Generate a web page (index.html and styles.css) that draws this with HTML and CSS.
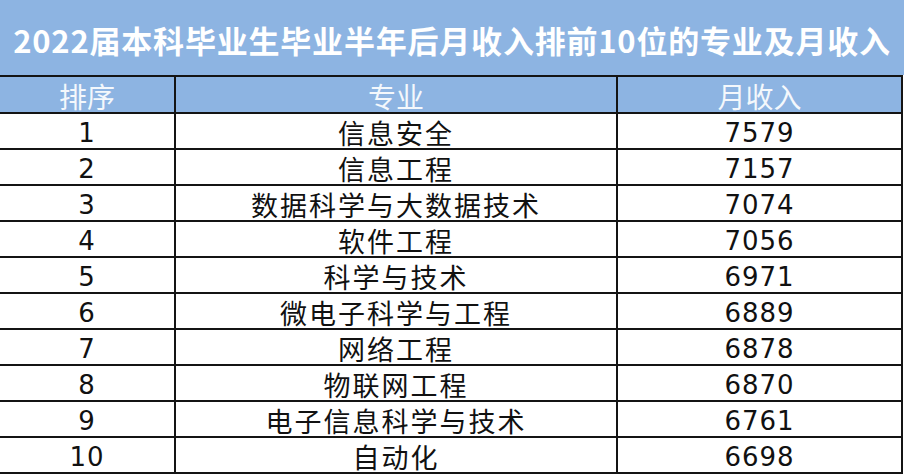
FILE: index.html
```html
<!DOCTYPE html>
<html lang="zh-CN">
<head>
<meta charset="utf-8">
<title>2022届本科毕业生毕业半年后月收入排前10位的专业及月收入</title>
<link rel="stylesheet" href="styles.css">
</head>
<body>
<div class="page">
  <div class="title">2022届本科毕业生毕业半年后月收入排前10位的专业及月收入</div>
  <div class="grid">
    <div class="cell head">排序</div>
    <div class="cell head">专业</div>
    <div class="cell head">月收入</div>

    <div class="cell num">1</div><div class="cell name">信息安全</div><div class="cell num">7579</div>
    <div class="cell num">2</div><div class="cell name">信息工程</div><div class="cell num">7157</div>
    <div class="cell num">3</div><div class="cell name">数据科学与大数据技术</div><div class="cell num">7074</div>
    <div class="cell num">4</div><div class="cell name">软件工程</div><div class="cell num">7056</div>
    <div class="cell num">5</div><div class="cell name">科学与技术</div><div class="cell num">6971</div>
    <div class="cell num">6</div><div class="cell name">微电子科学与工程</div><div class="cell num">6889</div>
    <div class="cell num">7</div><div class="cell name">网络工程</div><div class="cell num">6878</div>
    <div class="cell num">8</div><div class="cell name">物联网工程</div><div class="cell num">6870</div>
    <div class="cell num">9</div><div class="cell name">电子信息科学与技术</div><div class="cell num">6761</div>
    <div class="cell num">10</div><div class="cell name">自动化</div><div class="cell num">6698</div>
  </div>
</div>
</body>
</html>
```
FILE: styles.css
```css
html, body {
  margin: 0;
  padding: 0;
  background: #ffffff;
}
.page {
  width: 904px;
  height: 474px;
  overflow: hidden;
  background: #ffffff;
}
.title {
  height: 75px;
  background: #8db4e2;
  color: #ffffff;
  font-family: "Noto Sans CJK SC", "Noto Sans", sans-serif;
  font-weight: 700;
  font-size: 31px;
  line-height: 40px;
  letter-spacing: 0.8px;
  display: flex;
  align-items: center;
  justify-content: center;
  padding-top: 4px;
  box-sizing: border-box;
}
.grid {
  display: grid;
  grid-template-columns: 176px 442px 285px;
  grid-template-rows: 37px;
  grid-auto-rows: 36px;
  border-top: 2px solid #141414;
  width: 903px;
}
.cell {
  box-sizing: border-box;
  border-right: 2px solid #141414;
  border-bottom: 2px solid #141414;
  display: flex;
  align-items: center;
  justify-content: center;
  color: #111111;
}
.head {
  background: #8db4e2;
  color: #f4f8fc;
  font-family: "Noto Sans CJK SC", sans-serif;
  font-size: 28px;
  font-weight: 400;
  line-height: 30px;
  padding-top: 2px;
}
.name {
  font-family: "Noto Sans CJK SC", sans-serif;
  font-size: 27px;
  font-weight: 400;
  letter-spacing: 2px;
  line-height: 30px;
  padding-top: 3px;
}
.num {
  font-family: "DejaVu Sans", sans-serif;
  font-size: 26px;
  letter-spacing: 1px;
  line-height: 30px;
  padding-top: 3px;
}
```
